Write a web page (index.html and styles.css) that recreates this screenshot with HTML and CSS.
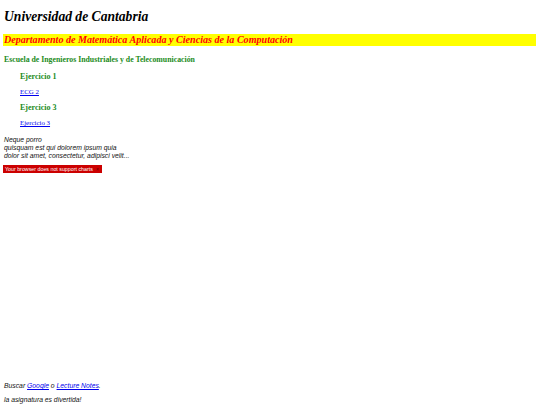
FILE: index.html
```html
<!DOCTYPE html>
<html lang="es">
<head>
<meta charset="utf-8">
<title>Universidad de Cantabria</title>
<link rel="stylesheet" href="styles.css">
</head>
<body>
<h1 class="uni">Universidad de Cantabria</h1>
<h2 class="dept">Departamento de Matemática Aplicada y Ciencias de la Computación</h2>
<h3 class="school">Escuela de Ingenieros Industriales y de Telecomunicación</h3>
<div class="exercises">
  <h3 class="ex-title">Ejercicio 1</h3>
  <p class="ex-link"><a href="#">ECG 2</a></p>
  <h3 class="ex-title">Ejercicio 3</h3>
  <p class="ex-link"><a href="#">Ejercicio 3</a></p>
</div>
<p class="quote">Neque porro<br>quisquam est qui dolorem ipsum quia<br>dolor sit amet, consectetur, adipisci velit...</p>
<div class="chart">
  <div class="chart-error">Your browser does not support charts<span class="close">×</span></div>
</div>
<p class="foot">Buscar <a href="#">Google</a> o <a href="#">Lecture Notes</a>.</p>
<p class="foot">la asignatura es divertida!</p>
</body>
</html>
```
FILE: styles.css
```css
html, body {
  margin: 0;
  padding: 0;
  background: #fff;
}
body {
  padding: 10px 4px 0 3px;
  font-family: "Liberation Serif", "Times New Roman", serif;
  color: #000;
}
.uni {
  font-size: 13.6px;
  font-style: italic;
  font-weight: bold;
  margin: 0 0 0 1px;
  line-height: 14px;
}
.dept {
  margin: 10px 0 0 0;
  background: #ffff00;
  color: #ff0000;
  font-size: 10.1px;
  font-style: italic;
  font-weight: bold;
  line-height: 12px;
  padding: 0 1px;
}
.school {
  margin: 8px 0 0 1px;
  color: #228b22;
  font-size: 7.8px;
  font-weight: bold;
  line-height: 11px;
}
.exercises {
  padding-left: 17px;
}
.ex-title {
  margin: 6px 0 0 0;
  color: #228b22;
  font-size: 8px;
  font-weight: bold;
  line-height: 11px;
}
.ex-link {
  margin: 5px 0 0 0;
  font-size: 6.9px;
  line-height: 9px;
}
.ex-link a, .foot a {
  color: #0000ee;
}
.quote {
  margin: 9px 0 0 1px;
  font-family: "Liberation Sans", Arial, sans-serif;
  font-style: italic;
  font-size: 6.8px;
  line-height: 8px;
  color: #111;
}
.chart {
  height: 217px;
  margin-top: 5px;
}
.chart-error {
  display: flex;
  align-items: center;
  width: 95px;
  height: 8px;
  background: #cc0000;
  color: #fff;
  font-family: "Liberation Sans", Arial, sans-serif;
  font-size: 5.3px;
  line-height: 8px;
  padding: 0 2px;
}
.close {
  margin-left: auto;
  margin-right: 1px;
  color: #660000;
  font-size: 5px;
}
.foot {
  margin: 0 0 6px 1px;
  font-family: "Liberation Sans", Arial, sans-serif;
  font-style: italic;
  font-size: 6.8px;
  line-height: 8px;
  color: #111;
}
```
